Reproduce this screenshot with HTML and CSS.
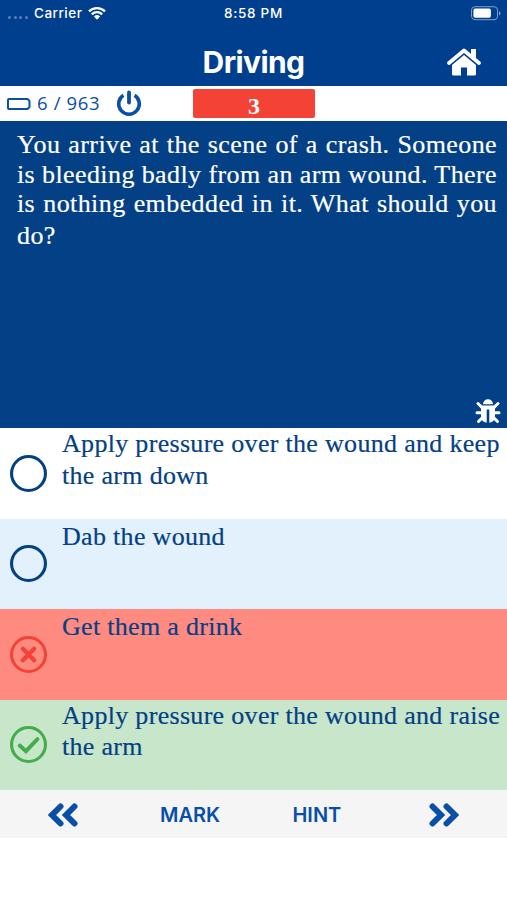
FILE: index.html
```html
<!DOCTYPE html>
<html lang="en">
<head>
    <meta charset="UTF-8">
    <meta name="viewport" content="width=device-width, initial-scale=1.0">
    <title>Driving</title>
    <link rel="stylesheet" href="styles.css">
</head>
<body>
    <header class="header">
        <div class="status-bar">
            <div class="carrier">
                <span class="signal"><i></i><i></i><i></i><i></i></span>
                <span class="carrier-name">Carrier</span>
                <svg class="wifi" viewBox="0 0 18 14" width="18" height="14">
                    <path d="M1 5.3a11.5 11.5 0 0 1 16 0M3.8 8.3a7.5 7.5 0 0 1 10.4 0" fill="none" stroke="currentColor" stroke-width="2.3"/>
                    <path d="M9 13.7L5.9 10.5a4.5 4.5 0 0 1 6.2 0z" fill="currentColor"/>
                </svg>
            </div>
            <span class="time">8:58 PM</span>
            <svg class="battery" viewBox="0 0 30 15" width="30" height="15">
                <rect x=".5" y=".7" width="26" height="13" rx="3.5" fill="none" stroke="#7f9fc8"/>
                <rect x="2.4" y="2.6" width="17.5" height="9.2" rx="1.8" fill="#fff"/>
                <path d="M28 5v4.500q1.500-.8 1.500-2.250T28 5z" fill="#7f9fc8"/>
            </svg>
        </div>
        <div class="title-bar">
            <h1>Driving</h1>
            <svg class="home" viewBox="0 0 34 28" width="34" height="28">
                <path d="M2 15L17 2.500l15 12.500" fill="none" stroke="#fff" stroke-width="3.700" stroke-linecap="round" stroke-linejoin="round"/>
                <path d="M24 1h5v10l-5-4.300z" fill="#fff"/>
                <path d="M17 6.900l12 10v9.100q0 1.500-1.500 1.500h-7.500v-8h-6v8H6.500Q5 27.500 5 26v-9.100z" fill="#fff"/>
            </svg>
        </div>
    </header>

    <div class="progress-bar">
        <svg class="cell" viewBox="0 0 24 12" width="24" height="12">
            <path d="M2 1h18.500L22.500 3v6l-2 2H2q-1 0-1-1V2q0-1 1-1z" fill="none" stroke="currentColor" stroke-width="2" stroke-linejoin="round"/>
        </svg>
        <span class="count">6 / 963</span>
        <svg class="power" viewBox="0 0 26 26" width="26" height="26">
            <path d="M7.400 5.300A10.300 10.300 0 1 0 18.600 5.300" fill="none" stroke="currentColor" stroke-width="3.500"/>
            <path d="M13 2.500v10" stroke="currentColor" stroke-width="3.800" stroke-linecap="round"/>
        </svg>
        <div class="score">3</div>
    </div>

    <section class="question">
        <p>
            <span>You arrive at the scene of a crash. Someone</span>
            <span>is bleeding badly from an arm wound. There</span>
            <span>is nothing embedded in it. What should you</span>
            <span class="last">do?</span>
        </p>
        <svg class="bug" viewBox="0 0 26 26" width="26" height="26">
            <path d="M8 6.300a5 5 0 0 1 10 0z" fill="#fff"/>
            <path d="M6 7.500h14v10q0 6.500-5.700 7.300V11.500h-2.600v13.300Q6 24 6 17.500z" fill="#fff"/>
            <path d="M3 5.500l4.500 4.500M23 5.500L18.500 10M2 14.700h6M24 14.700h-6M3.500 23.500L8 19M22.500 23.500L18 19" stroke="#fff" stroke-width="3" stroke-linecap="round"/>
        </svg>
    </section>

    <ul class="options">
        <li class="option">
            <svg class="mark" viewBox="0 0 36 36"><circle cx="18" cy="18" r="16.500"/></svg>
            <p>Apply pressure over the wound and keep<br>the arm down</p>
        </li>
        <li class="option alt single">
            <svg class="mark" viewBox="0 0 36 36"><circle cx="18" cy="18" r="16.500"/></svg>
            <p>Dab the wound</p>
        </li>
        <li class="option wrong single">
            <svg class="mark" viewBox="0 0 36 36">
                <circle cx="18" cy="18" r="16.500"/>
                <path d="M12.500 12.500l11 11M23.500 12.500l-11 11" stroke-width="4.200" stroke-linecap="round"/>
            </svg>
            <p>Get them a drink</p>
        </li>
        <li class="option right">
            <svg class="mark" viewBox="0 0 36 36">
                <circle cx="18" cy="18" r="16.500"/>
                <path d="M9.500 19l6 5.500L26.700 12.800" stroke-width="3.800" stroke-linecap="round"/>
            </svg>
            <p>Apply pressure over the wound and raise<br>the arm</p>
        </li>
    </ul>

    <nav class="toolbar">
        <a class="prev">
            <svg viewBox="0 0 30 24" width="30" height="24"><path d="M12.500 3.500L4 12l8.500 8.500M26.500 3.500L18 12l8.500 8.500"/></svg>
        </a>
        <a class="tool">MARK</a>
        <a class="tool">HINT</a>
        <a class="next">
            <svg viewBox="0 0 30 24" width="30" height="24"><path d="M3.500 3.500L12 12l-8.500 8.500M17.500 3.500L26 12l-8.500 8.500"/></svg>
        </a>
    </nav>
</body>
</html>
```
FILE: styles.css
```css
:root {
    --primary-color: #003e8e;
    --question-color: #034086;
    --link-color: #084fa8;
    --red: #f44336;
    --green: #43ad4b;
}

* {
    box-sizing: border-box;
    margin: 0;
    padding: 0;
}

body {
    width: 507px;
    min-height: 900px;
    background-color: #fff;
    font-family: Inter, sans-serif;
}

svg {
    display: block;
    flex: none;
}

/* Header */
.header {
    height: 86px;
    background-color: var(--primary-color);
    color: #fff;
}

.status-bar {
    display: grid;
    grid-template-columns: 1fr auto 1fr;
    align-items: center;
    height: 26px;
    padding: 0 6px 0 8px;
    font-size: 13.5px;
    font-weight: 500;
}

.carrier {
    display: flex;
    align-items: center;
}

.signal {
    display: flex;
    gap: 2.5px;
    width: 26px;
    padding-top: 8px;
}

.signal i {
    width: 3px;
    height: 3px;
    border-radius: 50%;
    background-color: #5a80b6;
}

.carrier-name {
    width: 54px;
    letter-spacing: 0.5px;
}

.time {
    margin-right: 2px;
    letter-spacing: 0.7px;
}

.battery {
    justify-self: end;
}

.title-bar {
    display: grid;
    grid-template-columns: 1fr auto 1fr;
    align-items: center;
    height: 60px;
    padding: 11px 26px 0;
}

.title-bar h1 {
    grid-column: 2;
    font-size: 30px;
    font-weight: 700;
    line-height: 36px;
    letter-spacing: -0.6px;
}

.home {
    justify-self: end;
}

/* Progress */
.progress-bar {
    display: flex;
    align-items: center;
    height: 35px;
    padding-left: 7px;
    color: var(--link-color);
}

.count {
    width: 72px;
    margin-left: 6px;
    padding-bottom: 3px;
    font-family: "Open Sans", sans-serif;
    font-size: 18.5px;
    letter-spacing: 0.65px;
    white-space: nowrap;
}

.power {
    margin-left: 7px;
    margin-bottom: 2px;
}

.score {
    width: 122px;
    height: 29px;
    margin-left: 51px;
    border-radius: 2px;
    background-color: var(--red);
    color: #fff;
    font: 700 24px/35px "Liberation Serif", serif;
    text-align: center;
}

/* Question */
.question {
    position: relative;
    height: 307px;
    padding: 9px 10px 0 17px;
    background-color: var(--question-color);
    color: #fff;
    font-family: Georgia, "Liberation Serif", serif;
    font-size: 26px;
    -webkit-text-stroke: 0.2px;
}

.question span {
    display: block;
    line-height: 29.5px;
    text-align-last: justify;
    letter-spacing: 0.4px;
    white-space: nowrap;
}

.question .last {
    line-height: 33px;
    text-align-last: left;
}

.bug {
    position: absolute;
    right: 6px;
    bottom: 4px;
}

/* Answers */
.options {
    list-style: none;
}

.option {
    display: flex;
    align-items: center;
    height: 90.5px;
    padding-left: 10px;
    color: var(--question-color);
}

.option p {
    align-self: flex-start;
    margin-left: 15px;
    font-family: Georgia, "Liberation Serif", serif;
    font-size: 26px;
    line-height: 31.5px;
    letter-spacing: 0.31px;
    white-space: nowrap;
    -webkit-text-stroke: 0.2px;
}

.option.single p {
    padding-top: 2px;
}

.mark {
    width: 37px;
    height: 37px;
    fill: none;
    stroke: currentColor;
    stroke-width: 3;
}

.option.alt {
    background-color: #e3f1fd;
}

.option.wrong {
    background-color: #ff8a80;
}

.option.wrong .mark {
    stroke: var(--red);
}

.option.right {
    background-color: #c8e6c9;
}

.option.right .mark {
    stroke: var(--green);
}

/* Bottom toolbar */
.toolbar {
    display: grid;
    grid-template-columns: repeat(4, 1fr);
    align-items: center;
    justify-items: center;
    height: 48px;
    padding-top: 1px;
    background-color: #f5f5f5;
    color: var(--link-color);
}

.toolbar svg {
    fill: none;
    stroke: currentColor;
    stroke-width: 6;
    stroke-linecap: round;
}

.tool {
    font-size: 20px;
    font-weight: 600;
}
```
